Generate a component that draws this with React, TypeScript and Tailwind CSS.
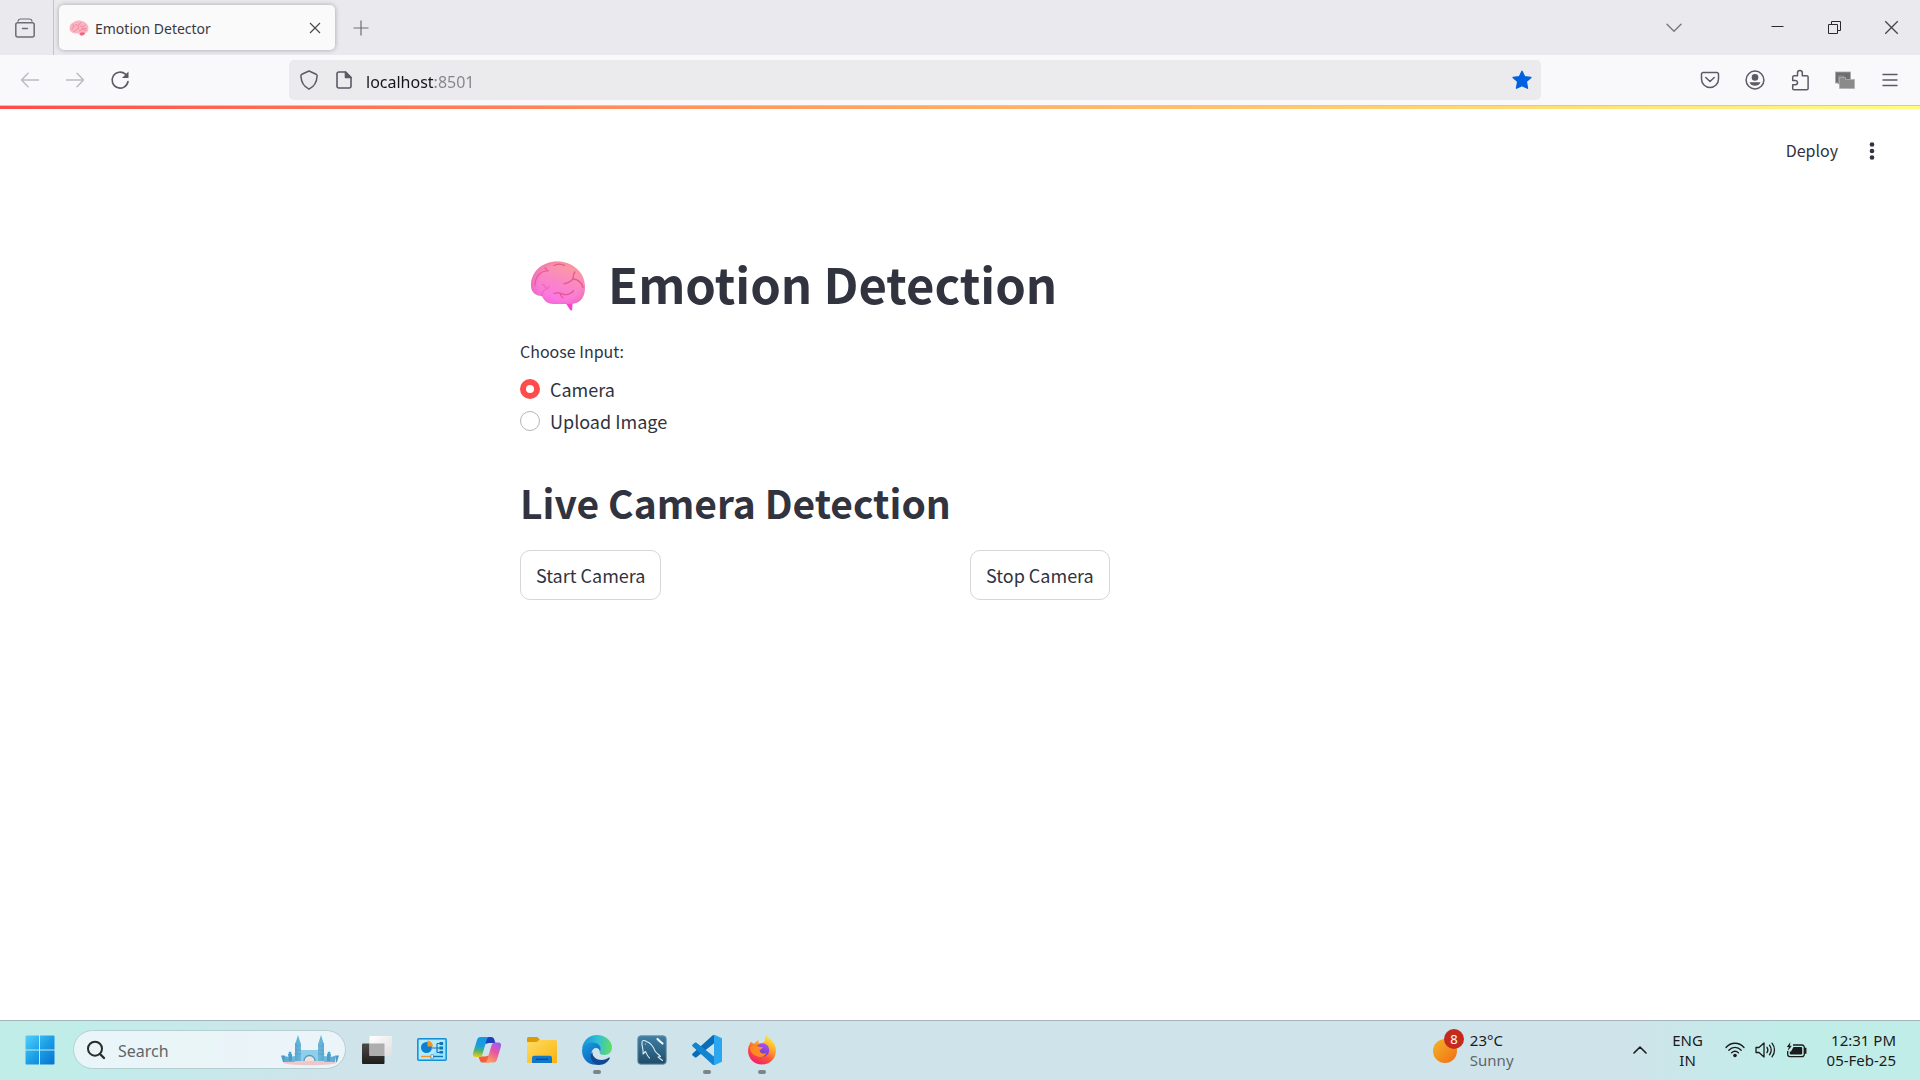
import { useState, type ReactNode } from "react";

type IconProps = { className?: string };

/* ---------- Browser icons ---------- */

const TabOverviewIcon = () => (
  <svg viewBox="0 0 20 20" className="size-5" fill="none" stroke="#6d6c77" strokeWidth="1.5" strokeLinecap="round">
    <path d="M3 3.2C3.2 1.8 4 1 5.200 1h9.600C16 1 16.800 1.800 17 3.200" strokeWidth="1.200" />
    <rect x="0.800" y="4.800" width="18.400" height="14.200" rx="2" />
    <path d="M7.500 10.500h5" />
  </svg>
);

const CloseIcon = ({ className }: IconProps) => (
  <svg viewBox="0 0 12 12" className={className} fill="none" stroke="#46454d" strokeWidth="1.100">
    <path d="M1 1l10 10M11 1L1 11" />
  </svg>
);

const PlusIcon = () => (
  <svg viewBox="0 0 16 16" className="size-4" stroke="#6d6c77" strokeWidth="1.200">
    <path d="M8 .5v15M.5 8h15" />
  </svg>
);

const ChevronDown = () => (
  <svg viewBox="0 0 16 10" className="h-[10px] w-4" fill="none" stroke="#7b7a84" strokeWidth="1.500" strokeLinecap="round">
    <path d="M1 1.200l7 7 7-7" />
  </svg>
);

const MinimizeIcon = () => (
  <svg viewBox="0 0 13 13" className="size-[13px]" stroke="#2b2a33" strokeWidth="1">
    <path d="M.5 5.500h12" />
  </svg>
);

const RestoreIcon = () => (
  <svg viewBox="0 0 13 13" className="size-[13px]" fill="none" stroke="#2b2a33" strokeWidth="1">
    <path d="M.5 3.500h9v9h-9zM3.500 3.500v-3h9v9h-3" />
  </svg>
);

const ArrowLeft = ({ className }: IconProps) => (
  <svg viewBox="0 0 20 16" className={className} fill="none" stroke="#bcbbc3" strokeWidth="1.500" strokeLinecap="round" strokeLinejoin="round">
    <path d="M18.500 8H1.500M8 1.300L1.500 8 8 14.700" />
  </svg>
);

const ReloadIcon = () => (
  <svg viewBox="0 0 20 20" className="size-5" fill="none" stroke="#5b5a66" strokeWidth="1.600" strokeLinecap="round">
    <path d="M18 11.500A8 8 0 1 1 15.500 4.200" />
    <path d="M18.500 1.500v6.500H12z" fill="#5b5a66" stroke="none" />
  </svg>
);

const ShieldIcon = () => (
  <svg viewBox="0 0 20 20" className="size-5" fill="none" stroke="#5b5a66" strokeWidth="1.500" strokeLinejoin="round">
    <path d="M10 1L17.200 4.300Q18.200 4.800 18.100 6C17.800 12 14.800 16.800 10 19.200 5.200 16.800 2.200 12 1.900 6 1.800 4.800 2.800 4.300 2.800 4.300z" />
  </svg>
);

const PageIcon = () => (
  <svg viewBox="0 0 16 18" className="h-[18px] w-4" fill="none" stroke="#5b5a66" strokeWidth="1.600" strokeLinejoin="round">
    <path d="M3 1h6.500L15 6.500V15a2 2 0 0 1-2 2H3a2 2 0 0 1-2-2V3a2 2 0 0 1 2-2z" />
    <path d="M9.500 1v5.500H15z" fill="#5b5a66" />
  </svg>
);

const StarIcon = () => (
  <svg viewBox="0 0 20 20" className="size-5" fill="#0061e0" stroke="#0061e0" strokeWidth="1.400" strokeLinejoin="round">
    <path d="M10 1.300l2.600 5.500 6.300.6-4.600 4.200 1.200 6.600L10 15.600 4.500 18.200l1.200-6.600L1.100 7.400l6.300-.6z" />
  </svg>
);

const PocketIcon = () => (
  <svg viewBox="0 0 20 18" className="h-[18px] w-5" fill="none" stroke="#5b5a66" strokeWidth="1.500" strokeLinecap="round" strokeLinejoin="round">
    <path d="M3.200 1.500h13.600A1.700 1.700 0 0 1 18.500 3.200V8a8.500 8.500 0 0 1-17 0V3.200A1.700 1.700 0 0 1 3.200 1.500z" />
    <path d="M5.800 6.500L10 10.500l4.200-4" />
  </svg>
);

const AccountIcon = () => (
  <svg viewBox="0 0 20 20" className="size-5" fill="none" stroke="#5b5a66" strokeWidth="1.500">
    <circle cx="10" cy="10" r="8.900" />
    <circle cx="10" cy="7.400" r="3.300" fill="#5b5a66" stroke="none" />
    <path d="M4.500 12.200h11c-.8 2.300-2.900 3.600-5.500 3.600s-4.700-1.300-5.500-3.600z" fill="#5b5a66" stroke="none" />
  </svg>
);

const PuzzleIcon = () => (
  <svg viewBox="0 0 20 22" className="h-[22px] w-5" fill="none" stroke="#5b5a66" strokeWidth="1.500" strokeLinejoin="round">
    <path d="M4 6.800h3.500V4a2.400 2.400 0 0 1 4.800 0v2.800h4.500a1.300 1.300 0 0 1 1.300 1.300v11.300a1.300 1.300 0 0 1-1.300 1.300H4a1.300 1.300 0 0 1-1.300-1.300v-3.600h2.600a2.200 2.200 0 0 0 0-4.400H2.700V8.100A1.300 1.300 0 0 1 4 6.800z" />
  </svg>
);

const WindowsExtensionIcon = () => (
  <svg viewBox="0 0 20 18" className="h-[18px] w-5">
    <rect x=".5" y="1" width="15" height="11" fill="#6e6e6e" stroke="#a9a9a9" strokeWidth=".8" />
    <path d="M3.500 5h5v8h-5z" fill="#7b7b7b" stroke="#959595" strokeWidth=".8" />
    <path d="M4.500 6.500h6v2h9v9h-15z" fill="#8a8a8a" stroke="#b0b0b0" strokeWidth=".8" />
  </svg>
);

const MenuIcon = () => (
  <svg viewBox="0 0 16 14" className="h-[14px] w-4" stroke="#5b5a66" strokeWidth="1.400" strokeLinecap="round">
    <path d="M1 1.500h14M1 7h14M1 12.500h14" />
  </svg>
);

const FaviconBrain = () => (
  <svg viewBox="0 0 20 16" className="h-4 w-5 shrink-0">
    <path d="M.7 9.500C0 6 1.500 3.500 4.500 2.200 7 .2 11 0 13.800 1.200c3 .8 5.500 3.500 5.600 6.800.2 2.500-1 4.400-3.400 5.200-.8 1.900-2.500 2.600-4.300 2-1.300-.3-2-1-2.700-1.900C5.800 13.800 1.500 13 .7 9.500z" fill="#fab3c0" />
    <path d="M11 13c1.500-1 4-.8 5 .2-.8 1.900-2.500 2.600-4.300 2-.6-.2-1-.9-.7-2.200z" fill="#f2647f" />
    <path d="M3 9.500c0-2 1.500-1.500 1.800-3.200M5 11.500c2-.2 1.500-2 3.500-2.500s1.500-2 .5-2.500M6.500 4.500c1.500-.2 1.500 1.500 3 .8s.5-2 2-2.500M11.500 6c1 0 1.500 1 2.700.6s1-1.500 2-1.600M10.500 11c1.500 0 1.500-1.500 3-1.600s1.500 1.200 3.500.6M13 8.500c1.500.2 2.500-.6 4-.3M4 4.500c.8.300 1 .8.500 1.500" fill="none" stroke="#ec7f96" strokeWidth=".8" strokeLinecap="round" />
  </svg>
);

const BrainEmoji = () => (
  <svg viewBox="0 0 56 52" className="mt-3.5 h-[52px] w-14 shrink-0" role="img" aria-label="Brain">
    <defs>
      <linearGradient id="brain" x1=".75" y1="0" x2=".3" y2="1">
        <stop offset="0" stopColor="#fc9f98" />
        <stop offset=".5" stopColor="#fa85c6" />
        <stop offset="1" stopColor="#fd70f0" />
      </linearGradient>
      <radialGradient id="brainShade" cx=".55" cy=".5" r=".55">
        <stop offset=".7" stopColor="#e0569b" stopOpacity="0" />
        <stop offset="1" stopColor="#d9528f" stopOpacity=".35" />
      </radialGradient>
    </defs>
    <path d="M35 42h7.500l-.3 7.500c-.2 1.300-1.400 1-2 .4z" fill="#f93fd0" />
    <path d="M12 36C5 36 1 31.500 1 25.500 1 11 13 1.500 27 1.500c15 0 27.800 10.500 28 24.500.1 5-.5 9-3 12.500C49 43 44 44 38 44H24c-6 0-10-3-12-8z" fill="url(#brain)" />
    <path d="M12 36C5 36 1 31.500 1 25.500 1 11 13 1.500 27 1.500c15 0 27.800 10.500 28 24.500.1 5-.5 9-3 12.500C49 43 44 44 38 44H24c-6 0-10-3-12-8z" fill="url(#brainShade)" />
    <g fill="none" stroke="#e2588f" strokeWidth="1.300" strokeLinecap="round" strokeLinejoin="round">
      <path d="M5 25c0-7 4-12 8.500-13.500 2-.7 4-.6 5-.8M17 10c-.5-1.300-1.200-1.900-2.200-2.200" opacity=".85" />
      <path d="M24 5.500c3-1.800 7-1.800 10.500 0" />
      <path d="M45 12c-1.200 1.500-2 3.500-1.800 5.500 0 2.500-4.200 5.500-9.200 6.200M43.500 19c4.500.5 8 3.500 9.500 8.500" />
      <path d="M12 36c0-3 1-5.500 3.500-6.500 2-.8 3-1.500 3.500-3M12.500 24.500c2 .3 2.500 1.700 3.500 3.500" opacity=".5" />
      <path d="M24 33.500c3-1 5.500-.8 8 .3s5.500 1.200 8-.3c2-1 3-1.300 3.500-3M30 33c.3 2.300 1.300 3.800 3 5" />
    </g>
  </svg>
);

/* ---------- Taskbar icons ---------- */

const StartIcon = () => (
  <svg viewBox="0 0 30 30" className="size-[30px]">
    <defs>
      <linearGradient id="start" x1="0" y1="0" x2="1" y2="1">
        <stop offset="0" stopColor="#50d1fb" />
        <stop offset=".5" stopColor="#1d9fe6" />
        <stop offset="1" stopColor="#0673cf" />
      </linearGradient>
    </defs>
    <path d="M1.500.5H14v14H.5v-13a1 1 0 0 1 1-1zM15 .5h13.500a1 1 0 0 1 1 1v13H15zM.5 15.500H14v14H1.500a1 1 0 0 1-1-1zM15 15.500h14.500v13a1 1 0 0 1-1 1H15z" fill="url(#start)" />
  </svg>
);

const SearchIcon = () => (
  <svg viewBox="0 0 20 20" className="size-5 shrink-0" fill="none" stroke="#2b2b2b" strokeWidth="2" strokeLinecap="round">
    <circle cx="9" cy="8.700" r="7" />
    <path d="M14 14l4 4" strokeWidth="2.400" />
  </svg>
);

const CastleArt = () => (
  <svg viewBox="0 0 60 32" className="h-8 w-[60px] shrink-0">
    <defs>
      <linearGradient id="castle" x1="0" y1="0" x2="1" y2="0">
        <stop offset="0" stopColor="#54a8d2" />
        <stop offset=".5" stopColor="#8fd3ec" />
        <stop offset="1" stopColor="#58a9d4" />
      </linearGradient>
    </defs>
    <ellipse cx="30" cy="28.500" rx="27" ry="2.800" fill="#f0c7c9" />
    <path d="M18 1l2.500 8h-5zM41 1l2.500 8h-5z" fill="#62b5d8" />
    <path d="M15 9h6v18h-6zM38 9h6v18h-6z" fill="url(#castle)" />
    <path d="M15 12h6M15 16h6M38 12h6M38 16h6M14.500 20h7M37.500 20h7" stroke="#5f9fc6" strokeWidth=".8" />
    <path d="M21 16h17v11h-4a5 5 0 0 0-10 0h-3z" fill="#90cfec" />
    <path d="M24 27a5.500 5.500 0 0 1 11 0" fill="#f2e3da" stroke="#5796bd" strokeWidth="1.300" />
    <path d="M4 22l5 1 6-1v6H4zM44 22l6 1 5-1v6H44z" fill="url(#castle)" />
    <path d="M1 21.500h4l-1 6.500H3zM55 21.500h4l-2 6.500h-1zM8 20h4v7H9zM47 20h4l-1 7h-3z" fill="#4b9cc9" />
    <circle cx="10" cy="19" r="1.500" fill="#4aa7cc" />
    <circle cx="49" cy="19" r="1.500" fill="#4aa7cc" />
  </svg>
);

const TaskViewIcon = () => (
  <svg viewBox="0 0 30 30" className="size-[30px]">
    <defs>
      <linearGradient id="tvDark" x1="0" y1="0" x2="0" y2="1">
        <stop offset="0" stopColor="#4b4a48" />
        <stop offset="1" stopColor="#1e1d1c" />
      </linearGradient>
      <linearGradient id="tvLight" x1="0" y1="0" x2="1" y2="1">
        <stop offset="0" stopColor="#fff" />
        <stop offset="1" stopColor="#dedede" />
      </linearGradient>
    </defs>
    <rect x="0" y="8.500" width="22.500" height="20.500" rx="1" fill="url(#tvDark)" />
    <rect x="7.500" y="1" width="22.500" height="20" rx="1" fill="url(#tvLight)" />
    <rect x="7.500" y="8.500" width="15" height="12.500" fill="#aeaeae" />
  </svg>
);

const ControlPanelIcon = () => (
  <svg viewBox="0 0 30 30" className="size-[30px]">
    <rect x=".8" y="3.800" width="28.400" height="21.400" rx="1" fill="#9be2fb" stroke="#1490d4" strokeWidth="1.500" />
    <path d="M2 5h26L12 24H2z" fill="#c5f0fd" opacity=".6" />
    <circle cx="9.500" cy="12.500" r="5.500" fill="#0d7fd0" />
    <path d="M10.500 11.500V5.500a6 6 0 0 1 5.500 6z" fill="#f7941d" />
    <path d="M15 13h5M20 8.500v9M20 8.500h3M20 17.500h3M20 13h3" stroke="#1374b9" strokeWidth="1.200" fill="none" />
    <path d="M22.500 7h3.500v3h-3.500zM22.500 11.500h3.500v3h-3.500zM22.500 16h3.500v2.500h-3.500z" fill="#1374b9" />
    <path d="M4 21.500h10" stroke="#f7941d" strokeWidth="1.400" />
    <path d="M16 21.500h10" stroke="#1374b9" strokeWidth="1.400" />
    <rect x="14" y="19.800" width="2.200" height="3.400" fill="#fff" stroke="#1374b9" strokeWidth=".6" />
  </svg>
);

const CopilotIcon = () => (
  <svg viewBox="0 0 30 30" className="size-[30px]">
    <defs>
      <linearGradient id="cpA" x1=".4" y1="0" x2=".3" y2="1">
        <stop offset="0" stopColor="#1596e8" />
        <stop offset=".45" stopColor="#1a9fd8" />
        <stop offset=".7" stopColor="#52b46b" />
        <stop offset="1" stopColor="#f2cb12" />
      </linearGradient>
      <linearGradient id="cpB" x1=".8" y1="0" x2=".3" y2="1">
        <stop offset="0" stopColor="#9a5ff0" />
        <stop offset=".45" stopColor="#e555a5" />
        <stop offset="1" stopColor="#ffa05a" />
      </linearGradient>
    </defs>
    <path d="M13 2h6c2 0 2.800 1 3.300 2.600L23.500 8H17l-4 1z" fill="#1f3fbd" />
    <path d="M17 27.500h-6c-2 0-2.800-1-3.300-2.600L6.500 21.500H13l4-1z" fill="#f0603a" />
    <path d="M8.500 2H17c-1.300.5-2 1.700-2.500 3.500l-4 13.500c-.6 2-1.600 3-3.500 3H4c-3 0-3.600-2-2.800-4.500L5 5C5.600 3 6.700 2 8.500 2z" fill="url(#cpA)" />
    <path d="M21.500 27.500H13c1.300-.5 2-1.700 2.500-3.500l4-13.500c.6-2 1.600-3 3.500-3h3c3 0 3.600 2 2.800 4.500L25 24.500c-.6 2-1.700 3-3.500 3z" fill="url(#cpB)" />
  </svg>
);

const ExplorerIcon = () => (
  <svg viewBox="0 0 30 30" className="size-[30px]">
    <defs>
      <linearGradient id="folder" x1="0" y1="0" x2="1" y2="1">
        <stop offset="0" stopColor="#ffdc66" />
        <stop offset="1" stopColor="#fbb40c" />
      </linearGradient>
    </defs>
    <path d="M0 3.500A1.500 1.500 0 0 1 1.500 2h9L13 5h-1v6H0z" fill="#dd9c07" />
    <path d="M0 7h9.500l3-2H28.500A1.500 1.500 0 0 1 30 6.500V28H0z" fill="url(#folder)" />
    <path d="M5 28v-5a2.300 2.300 0 0 1 2.300-2.300h15.400A2.300 2.300 0 0 1 25 23v5z" fill="#1177cd" />
    <path d="M9 24.300h12" stroke="#0a4a8c" strokeWidth="1.300" />
  </svg>
);

const EdgeIcon = () => (
  <svg viewBox="0 0 30 30" className="size-[30px]">
    <defs>
      <linearGradient id="edgeTop" x1="0" y1=".4" x2="1" y2=".5">
        <stop offset="0" stopColor="#1792d8" />
        <stop offset=".5" stopColor="#2fc0d6" />
        <stop offset="1" stopColor="#63dd62" />
      </linearGradient>
      <linearGradient id="edgeLeft" x1="0" y1="0" x2=".6" y2="1">
        <stop offset="0" stopColor="#1b9ae2" />
        <stop offset="1" stopColor="#0c62b8" />
      </linearGradient>
    </defs>
    <path d="M0 14.500C.5 6 7 0 15 0c8.500 0 15 6 15 12.500 0 4.500-3.200 7.500-7.700 7.500-3.300 0-5-1.200-4.500-2.700 1.500-2.300.8-5.300-1.800-7.300C11 7 3.500 9 0 14.500z" fill="url(#edgeTop)" />
    <path d="M0 15.500C1 10 6 7.500 10.500 7.500c5.500 0 8.500 3.500 8.200 7-.2 1.300-.5 2-.9 2.800.3-3.300-2.800-5.300-5.300-4-4.500 2.500-3.500 9 .5 12.500 2 1.800 4.500 2.900 7 3C8.500 32.500 0 25.500 0 15.500z" fill="url(#edgeLeft)" />
    <path d="M10.500 17c-.5 4.500 4 8 9 8 3 0 5.500-1 7.300-2.400.7-.5 1.400.3.900 1C25.500 27.500 22 30 17 30 10.500 29.500 6 21 10.500 17z" fill="#114a94" />
  </svg>
);

const WorkbenchIcon = () => (
  <svg viewBox="0 0 30 30" className="size-[30px]">
    <defs>
      <linearGradient id="wb" x1="0" y1="0" x2="0" y2="1">
        <stop offset="0" stopColor="#3e7ea6" />
        <stop offset="1" stopColor="#1f4d68" />
      </linearGradient>
    </defs>
    <rect x=".8" y=".8" width="28.400" height="28.400" rx="3" fill="url(#wb)" stroke="#6f93a8" strokeWidth="1" />
    <path d="M6 19C7 15 4.500 11 5 7.500 5 5 7.500 5 9.500 6.500c4.500 1.500 7 5.500 8.500 9.500 1.500 2.500 4 3.500 5.500 5.500l-2.500.5 4.500 3.500M6 19l2.500-2.500c1 2 2 5 4 6.500" fill="none" stroke="#dbe9f0" strokeWidth="1.100" strokeLinejoin="round" strokeLinecap="round" />
    <path d="M20.500 4l2 2M22.500 6l3 2.500" stroke="#eef6fa" strokeWidth="2.200" strokeLinecap="round" />
    <circle cx="8.500" cy="9" r=".6" fill="#dbe9f0" />
  </svg>
);

const VsCodeIcon = () => (
  <svg viewBox="0 0 30 30" className="size-[30px]">
    <path d="M22.500 8L4.500 22.300c-.5.400-1.200.4-1.700 0L.6 20.400c-.6-.5-.6-1.400 0-2L20.500.6c.6-.5 1.300-.7 2-.6z" fill="#0b6cb8" />
    <path d="M22.500 22L4.500 7.700c-.5-.4-1.200-.4-1.700 0L.6 9.600c-.6.5-.6 1.400 0 2l19.900 17.800c.6.500 1.300.7 2 .6z" fill="#1284d0" />
    <path d="M22 0h1L30 3.200v23.600L23 30h-1z" fill="#2aa7f0" />
  </svg>
);

const FirefoxIcon = () => (
  <svg viewBox="0 0 30 30" className="size-[30px]">
    <defs>
      <linearGradient id="fox" x1=".8" y1="0" x2=".25" y2="1">
        <stop offset="0" stopColor="#fff04a" />
        <stop offset=".35" stopColor="#ffae2b" />
        <stop offset=".65" stopColor="#ff5338" />
        <stop offset="1" stopColor="#ee1a70" />
      </linearGradient>
      <linearGradient id="globe" x1=".7" y1="0" x2=".3" y2="1">
        <stop offset="0" stopColor="#b44ff0" />
        <stop offset="1" stopColor="#5a3cc8" />
      </linearGradient>
    </defs>
    <path d="M4 6.500C5 8 6 8.500 7.500 8.500 8.500 7 10 5.500 11.500 5c-.3 1.500 0 2.700 1 3.500 2-.2 4-.8 5-2C17.800 3.500 18.500 1.500 20 0c1 3 4 4 5.500 6.500C27.500 8.500 29 12 29 15.500 29 23.500 23 29.500 15 29.500S1 23.500 1 15.500C1 12 2.500 9 4 6.500z" fill="url(#fox)" />
    <circle cx="15.500" cy="15" r="6.800" fill="url(#globe)" />
    <path d="M3 12c3-2 6.500-1.500 8.500-.5 1.500.7 3.500.3 4.500.8-.5 1.700-2.500 2-3.500 3.200.7 3 4 4 7 2.200-1.500 3.500-4.500 5-7.500 4.200C6.500 20.800 3 17 3 12z" fill="#ff8a26" />
  </svg>
);

const WeatherIcon = () => (
  <span className="relative mb-2 block h-[34px] w-[31px]">
    <span className="absolute bottom-0 left-0 size-6 rounded-full bg-linear-to-br from-[#f0b429] to-[#f26a12]" />
    <span className="absolute top-0 right-0 flex size-5 items-center justify-center rounded-full bg-[#c42b1c] text-[13px] leading-5 text-white">8</span>
  </span>
);

const TrayChevron = () => (
  <svg viewBox="0 0 14 8" className="h-2 w-3.5" fill="none" stroke="#1b1b1b" strokeWidth="1.600" strokeLinecap="round" strokeLinejoin="round">
    <path d="M1 7l6-6 6 6" />
  </svg>
);

const WifiIcon = () => (
  <svg viewBox="0 0 20 16" className="h-4 w-5" fill="none" stroke="#1b1b1b" strokeWidth="1.300" strokeLinecap="round">
    <path d="M1 5.500C6-.2 14-.2 19 5.500M3.800 8.200c3.500-3.900 8.900-3.900 12.400 0M6.500 10.900c2-2.200 5-2.200 7 0" />
    <circle cx="10" cy="13.500" r="1.800" fill="#1b1b1b" stroke="none" />
  </svg>
);

const VolumeIcon = () => (
  <svg viewBox="0 0 21 18" className="h-[18px] w-[21px]" fill="none" stroke="#1b1b1b" strokeWidth="1.300" strokeLinecap="round" strokeLinejoin="round">
    <path d="M1 6.500h3L9 2v14l-5-4.500H1z" />
    <path d="M12 6.300c1 1.500 1 3.900 0 5.400M14.500 4.200c2 2.800 2 6.800 0 9.600M17 2.200c3.300 4 3.300 9.600 0 13.600" />
  </svg>
);

const BatteryIcon = () => (
  <svg viewBox="0 0 21 16" className="h-4 w-[21px]" fill="none" stroke="#1b1b1b" strokeWidth="1.300">
    <path d="M7 3h9a2.300 2.300 0 0 1 2.300 2.300v7A2.300 2.300 0 0 1 16 14.600H4a2.300 2.300 0 0 1-2.300-2.300V9" />
    <path d="M7.500 5h7.700a1 1 0 0 1 1 1v5.600a1 1 0 0 1-1 1H4.800a1 1 0 0 1-1-1V9.500H5z" fill="#1b1b1b" stroke="none" />
    <path d="M18.500 6.500h1.300v4.500h-1.300" fill="#1b1b1b" />
    <path d="M4.500 0L.8 5h2L1.800 9l4-5.200H3.700z" fill="#1b1b1b" stroke="none" />
  </svg>
);

/* ---------- Shared pieces ---------- */

const IconButton = ({ label, className, children }: { label: string; className: string; children: ReactNode }) => (
  <button type="button" aria-label={label} className={`flex shrink-0 items-center justify-center ${className}`}>
    {children}
  </button>
);

const TabStrip = () => (
  <div className="flex h-[55px] items-center bg-[#eaeaee]">
    <IconButton label="View recent browsing" className="h-full w-[54px] border-r border-[#c5c4cb] pr-1">
      <TabOverviewIcon />
    </IconButton>
    <div className="ml-[5px] flex h-[45px] w-[276px] items-center rounded-[5px] bg-[#fafafb] pr-2.5 pl-2.5 shadow-[0_0_5px_rgba(0,0,0,0.3)]">
      <button type="button" className="flex flex-1 items-center gap-1.5 text-left text-[14px] text-[#3a3943]">
        <FaviconBrain />
        <span className="pt-0.5">Emotion Detector</span>
      </button>
      <IconButton label="Close tab" className="size-5">
        <CloseIcon className="size-3" />
      </IconButton>
    </div>
    <IconButton label="New tab" className="ml-3 h-10 w-7">
      <PlusIcon />
    </IconButton>
    <div className="flex-1" />
    <IconButton label="List all tabs" className="mr-[55px] size-10">
      <ChevronDown />
    </IconButton>
    <IconButton label="Minimize" className="h-10 w-[57px]">
      <MinimizeIcon />
    </IconButton>
    <IconButton label="Restore" className="h-10 w-[57px]">
      <RestoreIcon />
    </IconButton>
    <IconButton label="Close" className="h-10 w-[57px]">
      <CloseIcon className="size-[15px]" />
    </IconButton>
  </div>
);

const NavBar = () => (
  <div className="flex h-[51px] items-center border-b border-[#c9c8d0] bg-[#f9f9fb]">
    <div className="flex w-[289px] shrink-0 pl-[7px]">
      <IconButton label="Back" className="h-10 w-[45px]">
        <ArrowLeft className="h-4 w-5" />
      </IconButton>
      <IconButton label="Forward" className="h-10 w-[45px]">
        <ArrowLeft className="h-4 w-5 rotate-180" />
      </IconButton>
      <IconButton label="Reload" className="h-10 w-[45px]">
        <ReloadIcon />
      </IconButton>
    </div>
    <div className="flex h-10 flex-1 items-center rounded-[5px] bg-[#ebebed] pr-[7px] pl-2.5">
      <ShieldIcon />
      <span className="ml-[17px]">
        <PageIcon />
      </span>
      <input
        type="text"
        aria-label="Address"
        defaultValue="localhost:8501"
        className="ml-3.5 min-w-0 flex-1 bg-[linear-gradient(to_right,#15141a_68px,#84838b_68px)] bg-clip-text pt-[3px] text-[16px] text-transparent caret-black outline-none"
      />
      <IconButton label="Edit bookmark" className="size-6">
        <StarIcon />
      </IconButton>
    </div>
    <div className="flex w-[379px] shrink-0 justify-end pr-2">
      <IconButton label="Save to Pocket" className="h-10 w-[45px]">
        <PocketIcon />
      </IconButton>
      <IconButton label="Account" className="h-10 w-[45px]">
        <AccountIcon />
      </IconButton>
      <IconButton label="Extensions" className="h-10 w-[45px]">
        <PuzzleIcon />
      </IconButton>
      <IconButton label="Window extension" className="h-10 w-[45px]">
        <WindowsExtensionIcon />
      </IconButton>
      <IconButton label="Open menu" className="h-10 w-[45px]">
        <MenuIcon />
      </IconButton>
    </div>
  </div>
);

const RadioOption = ({ label, checked, onChange }: { label: string; checked: boolean; onChange: () => void }) => (
  <label className="flex h-8 w-fit items-center gap-2.5 text-[18px] leading-8">
    <input
      type="radio"
      name="input-source"
      checked={checked}
      onChange={onChange}
      className="size-5 appearance-none rounded-full border border-[#b4b5ba] checked:border-[6px] checked:border-[#ff4b4b]"
    />
    {label}
  </label>
);

const StreamlitApp = () => {
  const [source, setSource] = useState("Camera");
  return (
    <main className="flex flex-1 flex-col bg-white font-['Noto_Sans_CJK_SC','Noto_Sans_CJK_JP',sans-serif] text-[#31333f]">
      <div className="h-[3px] bg-linear-to-r from-[#ff4b4b] to-[#fffd80]" />
      <header className="flex h-[84px] items-center justify-end pr-[38px]">
        <button type="button" className="pb-0.5 text-[16px]">
          Deploy
        </button>
        <IconButton label="Main menu" className="ml-6 h-10 w-5">
          <svg viewBox="0 0 6 18" className="h-[18px] w-1.5" fill="#31333f">
            <circle cx="3" cy="2.500" r="2.300" />
            <circle cx="3" cy="9" r="2.300" />
            <circle cx="3" cy="15.500" r="2.300" />
          </svg>
        </IconButton>
      </header>
      <div className="mx-auto w-full max-w-[880px] pt-[53px]">
        <h1 className="flex h-20 items-start gap-[22px] pl-2.5 text-[49px] leading-[74px] font-bold">
          <BrainEmoji />
          Emotion Detection
        </h1>
        <fieldset className="mt-[13px]">
          <legend className="mb-2.5 text-[16px] leading-6">Choose Input:</legend>
          {["Camera", "Upload Image"].map((option) => (
            <RadioOption key={option} label={option} checked={source === option} onChange={() => setSource(option)} />
          ))}
        </fieldset>
        <h2 className="mt-[35px] text-[39px] leading-[60px] font-semibold">Live Camera Detection</h2>
        <div className="mt-[18px] grid grid-cols-2 gap-5">
          {["Start Camera", "Stop Camera"].map((action) => (
            <div key={action}>
              <button type="button" className="h-[50px] rounded-[10px] border border-[#d6d6d9] bg-white px-[15px] text-[18px]">
                {action}
              </button>
            </div>
          ))}
        </div>
      </div>
    </main>
  );
};

const apps: { name: string; icon: ReactNode; running: boolean }[] = [
  { name: "Task view", icon: <TaskViewIcon />, running: false },
  { name: "Control Panel", icon: <ControlPanelIcon />, running: false },
  { name: "Copilot", icon: <CopilotIcon />, running: false },
  { name: "File Explorer", icon: <ExplorerIcon />, running: false },
  { name: "Microsoft Edge", icon: <EdgeIcon />, running: true },
  { name: "MySQL Workbench", icon: <WorkbenchIcon />, running: false },
  { name: "Visual Studio Code", icon: <VsCodeIcon />, running: true },
  { name: "Firefox", icon: <FirefoxIcon />, running: true },
];

const Taskbar = () => (
  <footer className="flex h-[60px] items-center border-t border-[#a3b5ba] bg-[linear-gradient(to_right,#c1ede9_80px,#cfe3ea_350px,#cfe3ea_calc(100%-300px),#c1ede9_calc(100%-140px))] pb-0.5 text-[15px] leading-5 text-[#1b1b1b]">
    <IconButton label="Start" className="ml-[25px] h-12 w-[30px]">
      <StartIcon />
    </IconButton>
    <label className="ml-[18px] flex h-[39px] w-[273px] items-center rounded-full border border-[#b3cfd3] bg-[#f3f8fb]/80 pr-[5px] pl-3">
      <SearchIcon />
      <input
        type="search"
        aria-label="Search"
        placeholder="Search"
        className="ml-3 min-w-0 flex-1 bg-transparent pt-0.5 text-[16px] outline-none placeholder:text-[#5f6567]"
      />
      <CastleArt />
    </label>
    <nav className="ml-[3px] flex">
      {apps.map((app) => (
        <button key={app.name} type="button" aria-label={app.name} className="relative flex h-12 w-[55px] items-center justify-center">
          {app.icon}
          {app.running && <span className="absolute bottom-0 h-1 w-2 rounded-full bg-[#7d8486]" />}
        </button>
      ))}
    </nav>
    <div className="flex-1" />
    <button type="button" className="mr-[114px] flex items-center gap-1.5 text-left">
      <WeatherIcon />
      <span>
        <span className="block">23°C</span>
        <span className="block text-[#5f6769]">Sunny</span>
      </span>
    </button>
    <IconButton label="Show hidden icons" className="h-10 w-6">
      <TrayChevron />
    </IconButton>
    <button type="button" className="ml-[18px] w-9 text-center">
      ENG
      <br />
      IN
    </button>
    <button type="button" aria-label="Network, volume and battery" className="ml-[19px] flex items-center gap-2.5">
      <WifiIcon />
      <VolumeIcon />
      <BatteryIcon />
    </button>
    <button type="button" className="mr-6 ml-5 text-right">
      12:31 PM
      <br />
      05-Feb-25
    </button>
  </footer>
);

export default function App() {
  return (
    <div className="flex min-h-screen flex-col font-['Noto_Sans','Open_Sans',sans-serif]">
      <TabStrip />
      <NavBar />
      <StreamlitApp />
      <Taskbar />
    </div>
  );
}
